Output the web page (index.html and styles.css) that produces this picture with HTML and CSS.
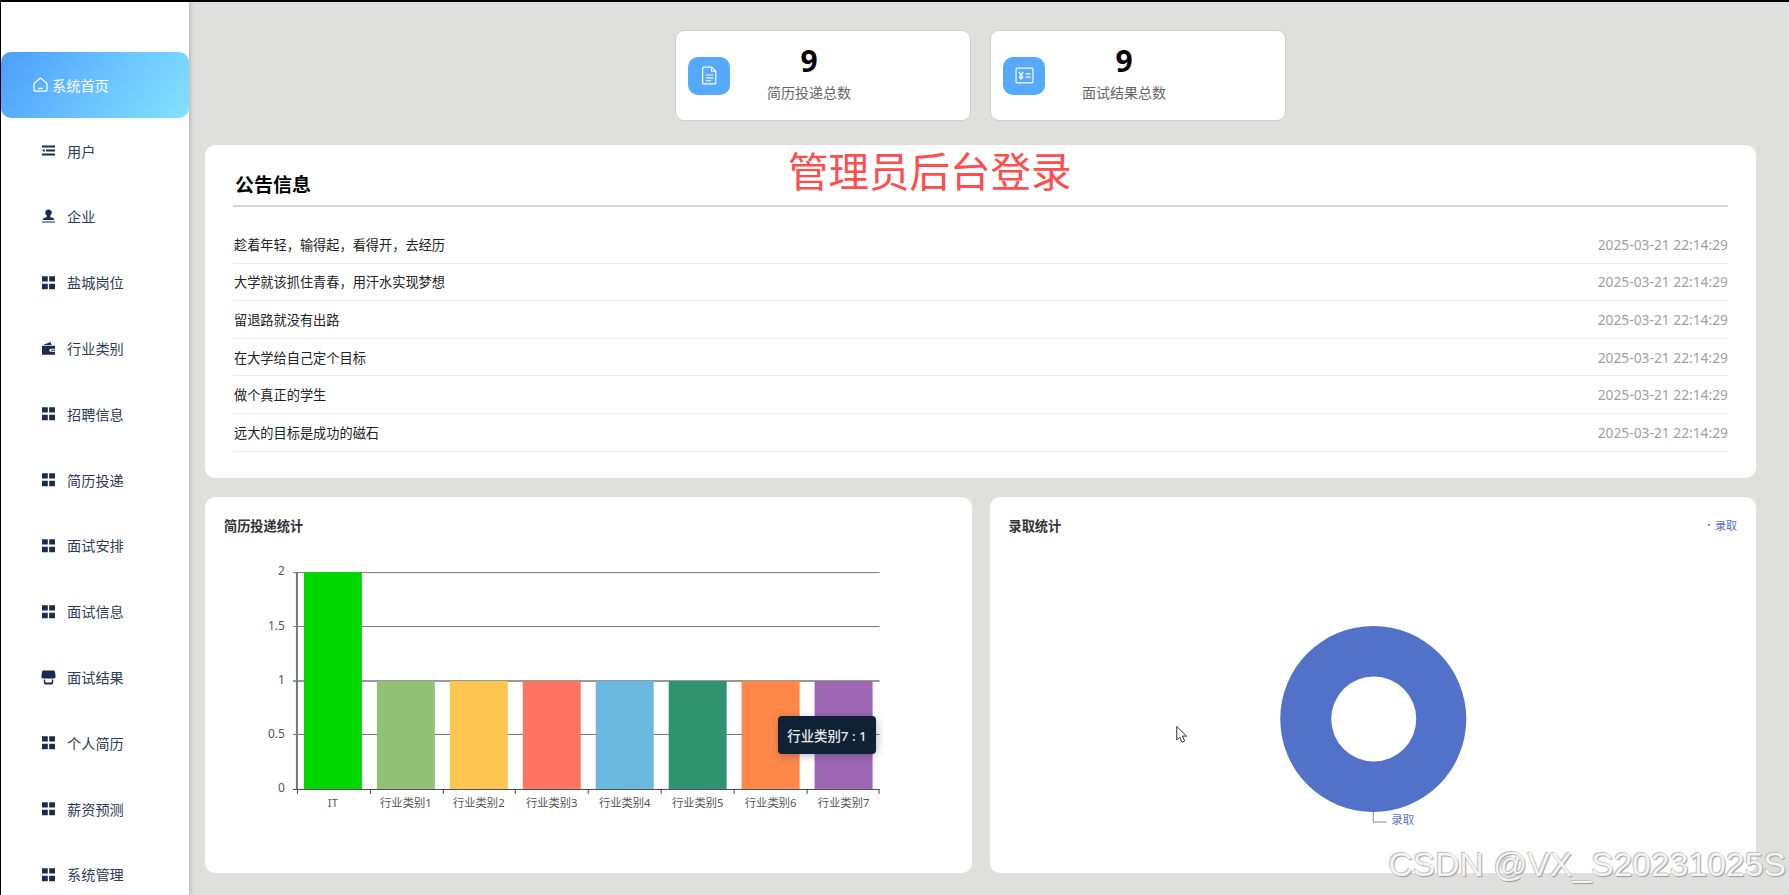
FILE: index.html
```html
<!DOCTYPE html>
<html lang="zh-CN">
<head>
<meta charset="utf-8">
<title>系统首页</title>
<link rel="stylesheet" href="styles.css">
</head>
<body>
<svg class="defs" aria-hidden="true">
  <symbol id="i-grid" viewBox="0 0 15 15"><path d="M1 1.200h5.800v5.400H1zM8.200 1.200H14v5.400H8.200zM1 8.800h5.800v5.400H1zM8.200 8.800H14v5.400H8.200z"/></symbol>
  <symbol id="i-list" viewBox="0 0 15 15"><path d="M1 2.500h13v2H1zM5 6.500h9v2H5zM1 10.500h13v2H1zM1 7.500l2.600-1.800v3.600z"/></symbol>
  <symbol id="i-user" viewBox="0 0 15 15"><path d="M7.500 0.400c2 0 3.300 1.400 3.300 3.200 0 1.300-.8 2.300-1.500 3v1.600c1.800.2 4 .8 4 2.700H1.700c0-1.900 2.200-2.500 4-2.700V6.600c-.7-.7-1.500-1.700-1.500-3C4.200 1.800 5.500.4 7.500.4zM1 12.400h13v1.200H1z"/></symbol>
  <symbol id="i-wallet" viewBox="0 0 15 15"><path d="M2 4 9.500 1l1.200 3zM1 4.800h13v2.900H9.800a1.500 1.500 0 0 0 0 3H14v3H1zM10 8.800h4v1h-4z"/></symbol>
  <symbol id="i-shop" viewBox="0 0 15 15"><path d="M2.500.6h10c.8 0 1.300.6 1.500 1.300l.6 4.300c.1 1-.6 2.300-1.600 2.300H2c-1 0-1.700-1.300-1.600-2.300l.6-4.300C1.200 1.200 1.700.6 2.500.6zM2.800 9.500h1.400v2.100c0 .7.300 1 1 1h4.600c.7 0 1-.3 1-1V9.500h1.400v2.700c0 1.400-.9 2.300-2.300 2.300H5.100c-1.400 0-2.300-.9-2.300-2.300z"/></symbol>
</svg>
<div class="app">
  <aside class="sidebar">
    <a class="nav-item active">
      <svg class="ico ico-home" viewBox="0 0 15 15"><path d="M1 6.400 7.500 1 14 6.400v6.400c0 .8-.5 1.300-1.300 1.300H2.300c-.8 0-1.300-.5-1.300-1.300z"/><path d="M5.800 11.500h3.400"/></svg>
      <span>系统首页</span>
    </a>
    <a class="nav-item"><svg class="ico"><use href="#i-list"/></svg><span>用户</span></a>
    <a class="nav-item"><svg class="ico"><use href="#i-user"/></svg><span>企业</span></a>
    <a class="nav-item"><svg class="ico"><use href="#i-grid"/></svg><span>盐城岗位</span></a>
    <a class="nav-item"><svg class="ico"><use href="#i-wallet"/></svg><span>行业类别</span></a>
    <a class="nav-item"><svg class="ico"><use href="#i-grid"/></svg><span>招聘信息</span></a>
    <a class="nav-item"><svg class="ico"><use href="#i-grid"/></svg><span>简历投递</span></a>
    <a class="nav-item"><svg class="ico"><use href="#i-grid"/></svg><span>面试安排</span></a>
    <a class="nav-item"><svg class="ico"><use href="#i-grid"/></svg><span>面试信息</span></a>
    <a class="nav-item"><svg class="ico"><use href="#i-shop"/></svg><span>面试结果</span></a>
    <a class="nav-item"><svg class="ico"><use href="#i-grid"/></svg><span>个人简历</span></a>
    <a class="nav-item"><svg class="ico"><use href="#i-grid"/></svg><span>薪资预测</span></a>
    <a class="nav-item"><svg class="ico"><use href="#i-grid"/></svg><span>系统管理</span></a>
  </aside>

  <main class="main">
    <section class="stats">
      <div class="stat-card">
        <div class="stat-icon">
          <svg class="stat-svg" viewBox="0 0 18 18"><path d="M3.500 1h7.500l4 4v11a1 1 0 0 1-1 1h-10.500a1 1 0 0 1-1-1V2a1 1 0 0 1 1-1z"/><path d="M11 1v4h4M5.500 8.500h7M5.500 11.200h7M5.500 14h5"/></svg>
        </div>
        <div class="stat-body"><div class="stat-num">9</div><div class="stat-label">简历投递总数</div></div>
      </div>
      <div class="stat-card">
        <div class="stat-icon">
          <svg class="stat-svg" viewBox="0 0 18 18"><rect x="1" y="2" width="16" height="14" rx="1"/><path d="M3.800 5.500 5.800 8.500 7.800 5.500M5.800 8.500V13M3.800 9.500h4M3.800 11.300h4M10.200 7.500h4.500M10.200 10.500h4.500"/></svg>
        </div>
        <div class="stat-body"><div class="stat-num">9</div><div class="stat-label">面试结果总数</div></div>
      </div>
    </section>

    <section class="notice">
      <h2 class="notice-title">公告信息</h2>
      <ul class="notice-list">
        <li class="notice-row"><span>趁着年轻，输得起，看得开，去经历</span><time class="notice-time">2025-03-21 22:14:29</time></li>
        <li class="notice-row"><span>大学就该抓住青春，用汗水实现梦想</span><time class="notice-time">2025-03-21 22:14:29</time></li>
        <li class="notice-row"><span>留退路就没有出路</span><time class="notice-time">2025-03-21 22:14:29</time></li>
        <li class="notice-row"><span>在大学给自己定个目标</span><time class="notice-time">2025-03-21 22:14:29</time></li>
        <li class="notice-row"><span>做个真正的学生</span><time class="notice-time">2025-03-21 22:14:29</time></li>
        <li class="notice-row"><span>远大的目标是成功的磁石</span><time class="notice-time">2025-03-21 22:14:29</time></li>
      </ul>
      <div class="overlay-title">管理员后台登录</div>
    </section>

    <section class="charts">
      <div class="chart-panel">
        <div class="chart-head"><h3 class="chart-title">简历投递统计</h3></div>
        <svg class="chart-svg" viewBox="205 550 767 323">
          <g class="grid">
            <path d="M293 572.500H880M293 626.500H880M293 734.500H880"/>
            <path class="grid-one" d="M293 681H880"/>
            <path class="axis-y" d="M297 572V789"/>
            <path class="axis-x" d="M293 789.500H880M297.500 789v5M370.500 789v5M443.500 789v5M515.500 789v5M588.500 789v5M661.500 789v5M734.500 789v5M807.500 789v5M879.500 789v5"/>
          </g>
          <rect class="b0" x="304" y="572" width="58" height="217"/>
          <rect class="b1" x="377" y="681" width="58" height="108"/>
          <rect class="b2" x="450" y="681" width="58" height="108"/>
          <rect class="b3" x="523" y="681" width="58" height="108"/>
          <rect class="b4" x="596" y="681" width="58" height="108"/>
          <rect class="b5" x="669" y="681" width="58" height="108"/>
          <rect class="b6" x="742" y="681" width="58" height="108"/>
          <rect class="b7" x="815" y="681" width="58" height="108"/>
          <g class="y-labels">
            <text x="285" y="575">2</text>
            <text x="285" y="630">1.5</text>
            <text x="285" y="684">1</text>
            <text x="285" y="738">0.5</text>
            <text x="285" y="792">0</text>
          </g>
          <g class="x-labels">
            <text x="333" y="807">IT</text>
            <text x="406" y="807">行业类别1</text>
            <text x="479" y="807">行业类别2</text>
            <text x="552" y="807">行业类别3</text>
            <text x="625" y="807">行业类别4</text>
            <text x="698" y="807">行业类别5</text>
            <text x="771" y="807">行业类别6</text>
            <text x="844" y="807">行业类别7</text>
          </g>
        </svg>
        <div class="tooltip">行业类别7 : 1</div>
      </div>
      <div class="chart-panel">
        <div class="chart-head">
          <h3 class="chart-title">录取统计</h3>
          <div class="legend"><i class="legend-dot"></i>录取</div>
        </div>
        <svg class="chart-svg" viewBox="990 550 766 323">
          <path class="donut" fill-rule="evenodd" d="M1280 719a93 93 0 1 0 186 0a93 93 0 1 0-186 0zM1331 719a42.500 42.500 0 1 1 85 0a42.500 42.500 0 1 1-85 0z"/>
          <path class="leader" d="M1373 812v10h13"/>
          <text class="donut-label" x="1391" y="824">录取</text>
          <path class="cursor" d="M1176.500 726.500v13.500l3-2.800 2.300 5 2.600-1.200-2.300-4.900h4.200z"/>
        </svg>
      </div>
    </section>
  </main>
  <div class="watermark">CSDN @VX_S20231025S</div>
</div>
</body>
</html>
```

FILE: styles.css
```css
* { box-sizing: border-box; }
html, body { margin: 0; padding: 0; height: 100%; }
body {
  font-family: "Noto Sans", "Noto Sans CJK SC", sans-serif;
  background: #dfdfde;
  overflow: hidden;
}
.defs { position: absolute; width: 0; height: 0; }

.app {
  position: relative;
  display: flex;
  height: 895px;
  overflow: hidden;
  background: #dfdfde;
  border-top: 2px solid #000;
  border-left: 1px solid #000;
}

/* sidebar */
.sidebar {
  flex: 0 0 188px;
  background: #fff;
  padding-top: 50px;
  box-shadow: 2px 0 3px #bdbdbd;
  position: relative;
}
.nav-item {
  display: flex;
  align-items: center;
  height: 65.8px;
  padding-left: 40px;
  gap: 11px;
  font-size: 14.2px;
  color: #2f3c58;
}
.nav-item.active {
  padding-left: 32px;
  gap: 4px;
  color: #fff;
  border-radius: 10px;
  background: linear-gradient(125deg, #4b9efc 0%, #6cc4ff 55%, #82e2ff 100%);
}
.ico { flex: 0 0 15px; width: 15px; height: 15px; fill: #1b2b50; }
.ico-home { fill: none; stroke: #fff; stroke-width: 1.3; stroke-linejoin: round; stroke-linecap: round; }

/* main */
.main {
  flex: 1;
  min-width: 0;
  padding: 28px 33px 0 16px;
}
.stats { display: flex; justify-content: center; gap: 19px; }
.stat-card {
  display: flex;
  align-items: center;
  width: 296px;
  height: 91px;
  padding-left: 12px;
  background: #fff;
  border: 1px solid #cfcfcf;
  border-radius: 9px;
}
.stat-icon {
  flex: 0 0 42px;
  height: 38px;
  display: flex;
  align-items: center;
  justify-content: center;
  background: #55a9ff;
  border-radius: 10px;
}
.stat-svg { width: 19px; height: 19px; fill: none; stroke: #fff; stroke-width: 1.1; }
.stat-body { width: 158px; padding-bottom: 6px; text-align: center; }
.stat-num { font-size: 30px; line-height: 36px; font-weight: 700; color: #000; }
.stat-label { font-size: 14px; line-height: 20px; color: #666; margin-top: 4px; }

.notice {
  position: relative;
  height: 333px;
  margin-top: 24px;
  padding: 0 28px;
  background: #fff;
  border-radius: 10px;
}
.notice-title {
  margin: 0;
  height: 62px;
  padding: 26px 0 0 2px;
  font-size: 19px;
  line-height: 28px;
  font-weight: 700;
  color: #000;
  border-bottom: 2px solid #d6d6d6;
}
.notice-list { list-style: none; margin: 19px 0 0; padding: 0; }
.notice-row {
  display: flex;
  align-items: center;
  justify-content: space-between;
  height: 37.6px;
  padding-left: 1px;
  font-size: 13.2px;
  color: #222;
  border-bottom: 1px solid #ededed;
}
.notice-time { font-size: 13.8px; color: #9f9f9f; }
.overlay-title {
  position: absolute;
  left: 583px;
  top: 0;
  font-size: 40.5px;
  line-height: 54px;
  color: #ff4d4d;
  white-space: nowrap;
}

/* charts */
.charts { display: flex; gap: 18px; margin-top: 19px; }
.chart-panel {
  position: relative;
  flex: 1;
  height: 376px;
  background: #fff;
  border-radius: 10px;
}
.chart-head {
  display: flex;
  justify-content: space-between;
  height: 53px;
  padding: 20px 19px 0;
}
.chart-title { margin: 0; font-size: 13.2px; line-height: 18px; font-weight: 700; color: #333; }
.legend { display: flex; align-items: center; height: 16px; font-size: 11px; color: #5972b8; }
.legend-dot { width: 2px; height: 2px; border-radius: 50%; background: #5972b8; margin-right: 5px; }
.chart-svg { display: block; width: 100%; height: 323px; }

.grid path { fill: none; stroke: #777; stroke-width: 1; }
.grid .grid-one { stroke: #999; stroke-width: 2; }
.grid .axis-y { stroke: #777; stroke-width: 2; }
.grid .axis-x { stroke: #444; stroke-width: 1; }
.b0 { fill: #00d800; }
.b1 { fill: #91c175; }
.b2 { fill: #ffc551; }
.b3 { fill: #ff7363; }
.b4 { fill: #6ab8de; }
.b5 { fill: #2f936e; }
.b6 { fill: #ff8748; }
.b7 { fill: #9d67b4; }
.y-labels text { font-size: 12px; fill: #555; text-anchor: end; }
.x-labels text { font-size: 11.3px; fill: #555; text-anchor: middle; }

.tooltip {
  position: absolute;
  left: 573px;
  top: 219px;
  width: 98px;
  height: 38px;
  display: flex;
  align-items: center;
  justify-content: center;
  font-size: 13.4px;
  font-weight: 500;
  color: #e8eaec;
  background: #0e2135;
  border-radius: 4px;
  box-shadow: 1px 2px 8px rgba(30, 40, 70, .3);
  white-space: nowrap;
}

.donut { fill: #5172c8; }
.leader { fill: none; stroke: #888; stroke-width: 1; }
.donut-label { font-size: 11.5px; fill: #5a75c5; }
.cursor { fill: #fff; stroke: #333; stroke-width: 1; stroke-linejoin: round; }

.watermark {
  position: absolute;
  right: 3px;
  bottom: 11px;
  font-family: "Liberation Sans", sans-serif;
  font-size: 33.7px;
  line-height: 40px;
  color: #f4f4f4;
  text-shadow: 1px 1px 1px #9a9a9a, -1px -1px 1px #bdbdbd;
  white-space: nowrap;
}
```
